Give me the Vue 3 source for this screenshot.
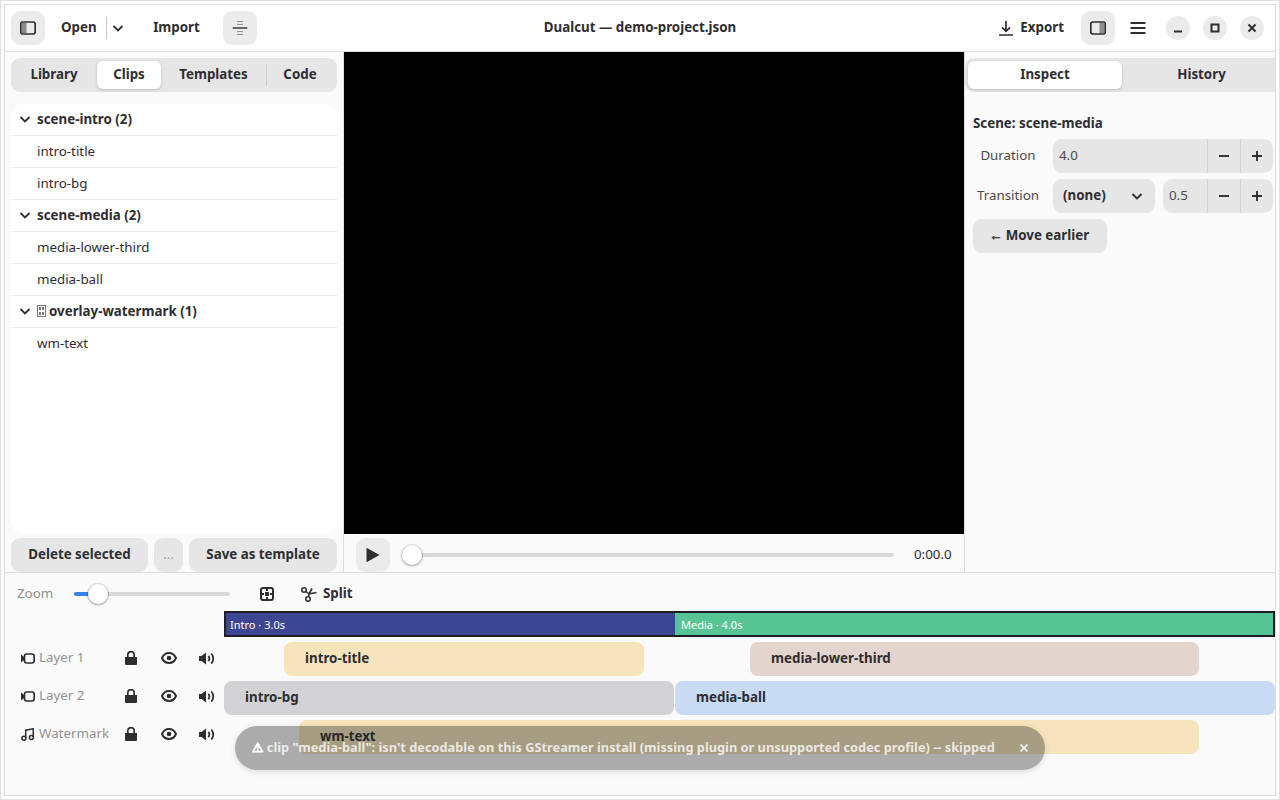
<template>
  <div class="screen">
    <div class="window">
      <header class="topbar">
        <div class="bar-side">
          <button class="icon-btn grey">
            <svg width="16" height="16" viewBox="0 0 16 16"><rect x=".8" y="2" width="14.400" height="12" rx="2" fill="none" stroke="#2e2e32" stroke-width="1.700"/><path d="M2 3h4.500v10H2z" fill="#2e2e32" opacity=".5"/></svg>
          </button>
          <div class="split-btn">
            <span class="open-label">Open</span>
            <span class="split-line"></span>
            <svg class="split-chev" width="12" height="12" viewBox="0 0 12 12"><path d="M1.500 4l4.500 4.500L10.500 4" fill="none" stroke="#2e2e32" stroke-width="1.800"/></svg>
          </div>
          <span class="import-label">Import</span>
          <button class="icon-btn grey snap">
            <svg width="16" height="16" viewBox="0 0 16 16"><path d="M5 1.500h6M5 4.500h6M5 11.500h6M5 14.500h6" stroke="#2e2e32" stroke-width="1.200" fill="none" opacity=".45"/><path d="M.7 8h14.600" stroke="#2e2e32" stroke-width="1.400"/></svg>
          </button>
        </div>
        <div class="title">Dualcut — demo-project.json</div>
        <div class="bar-side right">
          <div class="export">
            <svg width="14" height="16" viewBox="0 0 14 16"><path d="M7 1v10M3 7.400L7 11.400l4-4M0 15h14" fill="none" stroke="#2e2e32" stroke-width="1.700"/></svg>
            <span>Export</span>
          </div>
          <button class="icon-btn grey">
            <svg width="16" height="16" viewBox="0 0 16 16"><rect x=".8" y="2" width="14.400" height="12" rx="2" fill="none" stroke="#2e2e32" stroke-width="1.700"/><path d="M9.500 3H14v10H9.500z" fill="#2e2e32" opacity=".5"/></svg>
          </button>
          <button class="icon-btn">
            <svg width="16" height="16" viewBox="0 0 16 16"><path d="M.5 3h15M.5 8h15M.5 13h15" stroke="#2e2e32" stroke-width="2"/></svg>
          </button>
          <div class="win-btns">
            <span class="win-btn"><svg width="10" height="10" viewBox="0 0 10 10"><path d="M1 8.500h8" stroke="#2e2e32" stroke-width="2"/></svg></span>
            <span class="win-btn"><svg width="10" height="10" viewBox="0 0 10 10"><rect x="1.500" y="1.500" width="7" height="7" fill="none" stroke="#2e2e32" stroke-width="2"/></svg></span>
            <span class="win-btn"><svg width="10" height="10" viewBox="0 0 10 10"><path d="M1.500 1.500l7 7M8.500 1.500l-7 7" stroke="#2e2e32" stroke-width="2"/></svg></span>
          </div>
        </div>
      </header>

      <div class="main">
        <aside class="left">
          <div class="tabs">
            <span v-for="t in leftTabs" :key="t.name" class="tab" :class="[t.cls, { active: t.name === 'Clips' }]">{{ t.name }}</span>
            <span class="tab-sep"></span>
          </div>
          <div class="clip-list">
            <div v-for="row in clipRows" :key="row.name" class="clip-row" :class="{ head: row.head }">
              <svg v-if="row.head" class="row-chev" width="12" height="12" viewBox="0 0 12 12"><path d="M1.500 4l4.500 4.500L10.500 4" fill="none" stroke="#2e2e32" stroke-width="1.800"/></svg>
              <svg v-if="row.tofu" class="tofu" width="9" height="12" viewBox="0 0 9 12">
                <rect x=".5" y=".5" width="8" height="11" fill="none" stroke="#77777a"/>
                <path d="M2 2h2v3H2zM5 2h2v3H5zM2 7h2v3H2zM5 7h2v3H5z" fill="#77777a"/>
              </svg>
              <span>{{ row.name }}</span>
            </div>
          </div>
          <div class="left-actions">
            <button class="btn del">Delete selected</button>
            <button class="btn more">...</button>
            <button class="btn save">Save as template</button>
          </div>
        </aside>

        <section class="center">
          <div class="video"></div>
          <div class="transport">
            <button class="icon-btn grey">
              <svg width="16" height="16" viewBox="0 0 16 16"><path d="M1.500 .7L14.500 8 1.500 15.300z" fill="#2e2e32"/></svg>
            </button>
            <div class="seek">
              <span class="thumb seek-thumb"></span>
            </div>
            <span class="time">0:00.0</span>
          </div>
        </section>

        <aside class="inspector">
          <div class="tabs wide">
            <span class="tab active">Inspect</span>
            <span class="tab">History</span>
          </div>
          <div class="scene-title">Scene: scene-media</div>
          <div class="prop-row">
            <span class="prop-label">Duration</span>
            <div class="spin grow">
              <span class="spin-val">4.0</span>
              <span class="spin-btn"><svg width="12" height="12" viewBox="0 0 12 12"><path d="M1 6h10" stroke="#2e2e32" stroke-width="1.900"/></svg></span>
              <span class="spin-btn"><svg width="12" height="12" viewBox="0 0 12 12"><path d="M1 6h10M6 1v10" stroke="#2e2e32" stroke-width="1.900"/></svg></span>
            </div>
          </div>
          <div class="prop-row">
            <span class="prop-label">Transition</span>
            <div class="dropdown">
              <span>(none)</span>
              <svg width="12" height="12" viewBox="0 0 12 12"><path d="M1.500 4l4.500 4.500L10.500 4" fill="none" stroke="#2e2e32" stroke-width="1.800"/></svg>
            </div>
            <div class="spin small">
              <span class="spin-val">0.5</span>
              <span class="spin-btn"><svg width="12" height="12" viewBox="0 0 12 12"><path d="M1 6h10" stroke="#2e2e32" stroke-width="1.900"/></svg></span>
              <span class="spin-btn"><svg width="12" height="12" viewBox="0 0 12 12"><path d="M1 6h10M6 1v10" stroke="#2e2e32" stroke-width="1.900"/></svg></span>
            </div>
          </div>
          <button class="btn move"><span class="arrow">←</span> Move earlier</button>
        </aside>
      </div>

      <section class="timeline">
        <div class="tools">
          <span class="zoom-label">Zoom</span>
          <div class="zoom-slider">
            <span class="zoom-fill"></span>
            <span class="thumb zoom-thumb"></span>
          </div>
          <svg class="fit" width="16" height="16" viewBox="0 0 16 16">
            <rect x="2" y="2" width="12" height="12" rx="2" fill="none" stroke="#2e2e32" stroke-width="2"/>
            <path d="M6 6h4v4H6zM7 3h2v2H7zM7 11h2v2H7zM3 7h2v2H3zM11 7h2v2h-2z" fill="#2e2e32"/>
          </svg>
          <div class="split">
            <svg width="16" height="16" viewBox="0 0 16 16"><circle cx="3" cy="4" r="2.200" fill="none" stroke="#2e2e32" stroke-width="1.600"/><circle cx="7" cy="13" r="2.200" fill="none" stroke="#2e2e32" stroke-width="1.600"/><path d="M5 5.500L8 8l7.500-1.500M7.500 10.800L8 8l3-5.500" fill="none" stroke="#2e2e32" stroke-width="1.600"/></svg>
            <span>Split</span>
          </div>
        </div>

        <div class="ruler-row">
          <div class="ruler">
            <span class="scene intro">Intro · 3.0s</span>
            <span class="scene media">Media · 4.0s</span>
          </div>
        </div>

        <div class="layers">
          <div class="layer-heads">
            <div v-for="layer in layers" :key="layer.name" class="layer-head">
              <svg v-if="layer.kind === 'video'" class="kind" width="14" height="11" viewBox="0 0 14 11"><path d="M0 1.500L3 4V7L0 9.500z" fill="#2e2e32"/><rect x="3.500" y="1" width="9.700" height="9" rx="2.200" fill="none" stroke="#2e2e32" stroke-width="1.700"/></svg>
              <svg v-else class="kind" width="14" height="13" viewBox="0 0 14 13"><path d="M4.700 10V2.200l7.500-1.400V9" fill="none" stroke="#2e2e32" stroke-width="1.500"/><circle cx="2.900" cy="10.200" r="2" fill="none" stroke="#2e2e32" stroke-width="1.500"/><circle cx="10.400" cy="9.400" r="2" fill="none" stroke="#2e2e32" stroke-width="1.500"/></svg>
              <span class="layer-name">{{ layer.name }}</span>
              <svg class="l-lock" width="12" height="14" viewBox="0 0 12 14"><path d="M0 6h12v7a1 1 0 0 1-1 1H1a1 1 0 0 1-1-1z" fill="#2e2e32"/><path d="M2.800 6.500V3.800a3.200 3.200 0 0 1 6.400 0v2.700" fill="none" stroke="#2e2e32" stroke-width="1.700"/></svg>
              <svg class="l-eye" width="16" height="12" viewBox="0 0 16 12"><path d="M1 6C2.500 2.500 5 1 8 1s5.500 1.500 7 5c-1.500 3.500-4 5-7 5S2.500 9.500 1 6z" fill="none" stroke="#2e2e32" stroke-width="2"/><circle cx="8" cy="6" r="2.300" fill="#2e2e32"/></svg>
              <svg class="l-vol" width="16" height="13" viewBox="0 0 16 13"><path d="M0 4h2.500L7 .5v12L2.500 9H0z" fill="#2e2e32"/><path d="M9.300 3.800a3.800 3.800 0 0 1 0 5.400M12.300 1.500a7.500 7.500 0 0 1 0 10" fill="none" stroke="#2e2e32" stroke-width="1.800"/></svg>
            </div>
          </div>
          <div class="tracks">
            <div v-for="layer in layers" :key="layer.name" class="track">
              <div
                v-for="c in layer.clips"
                :key="c.name"
                class="clip"
                :style="{ left: c.start * pxPerSec + c.nudge + 'px', width: c.dur * pxPerSec + 'px', background: c.color }"
              >{{ c.name }}</div>
            </div>
          </div>
        </div>

        <div class="toast">
          <span class="toast-text"><span class="warn">⚠</span> clip "media-ball": isn't decodable on this GStreamer install (missing plugin or unsupported codec profile) -- skipped</span>
          <svg class="toast-x" width="10" height="10" viewBox="0 0 10 10"><path d="M1.500 1.500l7 7M8.500 1.500l-7 7" stroke="#fff" stroke-width="1.900"/></svg>
        </div>
      </section>
    </div>
  </div>
</template>

<script setup>
const pxPerSec = 150

const leftTabs = [
  { name: 'Library', cls: 't-lib' },
  { name: 'Clips', cls: 't-clips' },
  { name: 'Templates', cls: 't-tpl' },
  { name: 'Code', cls: 't-code' }
]

const clipRows = [
  { name: 'scene-intro (2)', head: true },
  { name: 'intro-title' },
  { name: 'intro-bg' },
  { name: 'scene-media (2)', head: true },
  { name: 'media-lower-third' },
  { name: 'media-ball' },
  { name: 'overlay-watermark (1)', head: true, tofu: true },
  { name: 'wm-text' }
]

const layers = [
  {
    name: 'Layer 1',
    kind: 'video',
    clips: [
      { name: 'intro-title', start: 0.4, dur: 2.4, nudge: 0, color: '#f5e4bc' },
      { name: 'media-lower-third', start: 3.5, dur: 2.994, nudge: 1, color: '#e3d5cd' }
    ]
  },
  {
    name: 'Layer 2',
    kind: 'video',
    clips: [
      { name: 'intro-bg', start: 0, dur: 3, nudge: 0, color: '#d2d2d5' },
      { name: 'media-ball', start: 3, dur: 4, nudge: 1, color: '#c8daf4' }
    ]
  },
  {
    name: 'Watermark',
    kind: 'audio',
    clips: [{ name: 'wm-text', start: 0.5, dur: 6, nudge: 0, color: '#f5e4bc' }]
  }
]
</script>

<style>
html, body { margin: 0; background: #fff; }
</style>

<style scoped>
* { box-sizing: border-box; }

.screen {
  width: 1280px;
  height: 800px;
  padding: 3px;
  border: 1px solid #e0e0e0;
  background: #fff;
  font-family: "Noto Sans", sans-serif;
  font-size: 13.33px;
  color: #2e2e32;
}
.window {
  position: relative;
  height: 100%;
  border: 1px solid #dcdcdc;
  background: #fafafa;
  display: flex;
  flex-direction: column;
  overflow: hidden;
}

.topbar {
  height: 47px;
  flex: none;
  background: #fff;
  border-bottom: 1px solid #dedede;
  padding: 6px 11px 6px 6px;
  display: flex;
  align-items: center;
  justify-content: space-between;
  position: relative;
}
.bar-side { display: flex; align-items: center; }
.icon-btn {
  width: 34px;
  height: 34px;
  border: none;
  border-radius: 9px;
  background: transparent;
  padding: 0;
  display: flex;
  align-items: center;
  justify-content: center;
  flex: none;
}
.icon-btn.grey { background: #ebebeb; }
.split-btn { display: flex; align-items: center; margin-left: 16px; font-weight: 700; }
.open-label { margin-top: -3px; width: 36px; }
.split-line { width: 1px; height: 22px; background: #c6c6c6; margin-left: 9px; }
.split-chev { margin-left: 5px; }
.import-label { font-weight: 700; margin: -3px 0 0 29px; width: 47px; text-align: center; white-space: nowrap; }
.snap { margin-left: 23px; }
.title {
  position: absolute;
  left: 0;
  right: 0;
  top: 13px;
  text-align: center;
  font-weight: 700;
  pointer-events: none;
}
.export { display: flex; align-items: center; gap: 7px; font-weight: 700; margin-right: 17px; }
.export span { margin-top: -3px; }
.bar-side.right .icon-btn + .icon-btn { margin-left: 6px; }
.win-btns { display: flex; gap: 13px; margin-left: 11px; }
.win-btn {
  width: 24px;
  height: 24px;
  border-radius: 50%;
  background: #ebebeb;
  display: flex;
  align-items: center;
  justify-content: center;
}

.main { height: 521px; flex: none; display: flex; border-bottom: 1px solid #dedede; }

.left {
  width: 339px;
  flex: none;
  border-right: 1px solid #dedede;
  padding: 6px 6px 0;
  display: flex;
  flex-direction: column;
}
.tabs {
  position: relative;
  height: 34px;
  flex: none;
  background: #e6e6e6;
  border-radius: 9px;
  padding: 3px;
  display: flex;
  font-weight: 700;
}
.tab {
  height: 28px;
  padding-bottom: 3px;
  display: flex;
  align-items: center;
  justify-content: center;
  border-radius: 6px;
}
.tab.active { background: #fff; box-shadow: 0 1px 3px rgba(0, 0, 0, 0.18); }
.t-lib { width: 83px; padding-right: 3px; }
.t-clips { width: 64px; }
.t-tpl { width: 105px; }
.t-code { width: 68px; }
.tab-sep {
  position: absolute;
  left: 255px;
  top: 6px;
  width: 1px;
  height: 22px;
  background: #cfcfcf;
}
.clip-list {
  margin-top: 12px;
  height: 429px;
  flex: none;
  background: #fff;
  border-radius: 12px;
}
.clip-row {
  height: 32px;
  padding: 0 0 2px 26px;
  display: flex;
  align-items: center;
  border-bottom: 1px solid #ededed;
}
.clip-row:last-child { border-bottom: none; }
.clip-row.head { padding-left: 8px; font-weight: 700; }
.row-chev { margin-right: 6px; }
.tofu { margin-right: 3px; }
.left-actions { display: flex; gap: 6px; margin-top: 5px; }
.btn {
  height: 34px;
  border: none;
  border-radius: 9px;
  background: #e6e6e6;
  font: 700 13.33px "Noto Sans", sans-serif;
  color: #2e2e32;
  padding: 0 0 3px;
}
.del { width: 137px; }
.more { width: 29px; font-weight: 400; color: #9a9a9a; font-size: 13px; }
.save { width: 148px; }

.center { width: 620px; flex: none; display: flex; flex-direction: column; }
.video { height: 482px; background: #000; }
.transport {
  height: 38px;
  display: flex;
  align-items: flex-start;
  padding: 4px 12px 0;
}
.seek {
  position: relative;
  width: 492px;
  height: 4px;
  background: #dadada;
  border-radius: 2px;
  margin: 15px 0 0 12px;
}
.thumb {
  position: absolute;
  width: 20px;
  height: 20px;
  border-radius: 50%;
  background: #fff;
  box-shadow: 0 0 0 1px rgba(0, 0, 0, 0.1), 0 1px 3px rgba(0, 0, 0, 0.3);
}
.seek-thumb { left: 0; top: -8px; }
.time { margin-left: 20px; margin-top: 7px; }

.inspector {
  flex: 1;
  border-left: 1px solid #dedede;
  padding-top: 6px;
  min-width: 0;
}
.tabs.wide { border-radius: 9px 0 0 9px; padding-right: 0; }
.tabs.wide .tab { width: 154px; }
.tabs.wide .tab + .tab { flex: 1; padding-left: 6px; }
.scene-title { font-weight: 700; margin: 21px 0 0 8px; height: 20px; line-height: 20px; }
.prop-row { display: flex; align-items: center; margin: 6px 2px 0 8px; gap: 8px; }
.prop-label { width: 72px; flex: none; text-align: center; color: #4a4a4e; padding: 0 2px 2px 0; }
.spin {
  height: 34px;
  background: #e6e6e6;
  border-radius: 9px;
  display: flex;
  align-items: center;
}
.spin.grow { flex: 1; }
.spin.small { width: 110px; }
.spin-val { flex: 1; padding: 0 0 2px 6px; color: #4a4a4e; }
.spin-btn {
  width: 33px;
  height: 34px;
  border-left: 1px solid #d2d2d2;
  display: flex;
  align-items: center;
  justify-content: center;
}
.dropdown {
  width: 102px;
  height: 34px;
  flex: none;
  background: #e6e6e6;
  border-radius: 9px;
  padding: 0 12px 0 10px;
  display: flex;
  align-items: center;
  justify-content: space-between;
  font-weight: 700;
}
.dropdown span { margin-top: -3px; }
.move { width: 134px; margin: 6px 0 0 8px; display: block; padding-right: 2px; }
.arrow { -webkit-text-stroke: 0.4px #2e2e32; }

.timeline { flex: 1; position: relative; min-height: 0; }
.tools { height: 38px; display: flex; align-items: center; padding-left: 12px; margin-top: 2px; }
.zoom-label { color: #8f8f8f; width: 57px; flex: none; padding-bottom: 2px; }
.zoom-slider {
  position: relative;
  width: 156px;
  height: 4px;
  background: #dadada;
  border-radius: 2px;
}
.zoom-fill {
  position: absolute;
  left: 0;
  top: 0;
  width: 20px;
  height: 4px;
  border-radius: 2px;
  background: #3584e4;
}
.zoom-thumb { left: 14px; top: -8px; }
.fit { margin-left: 29px; }
.split { display: flex; align-items: center; gap: 6px; margin-left: 26px; font-weight: 700; }
.split span { margin-top: -3px; }
.ruler-row { padding-left: 219px; margin-top: -2px; }
.ruler {
  height: 26px;
  border: 2px solid #1e1e22;
  display: flex;
  font-size: 11px;
  color: #fff;
}
.scene { display: flex; align-items: center; padding-left: 4px; }
.scene.intro { width: 449px; background: #3d4692; }
.scene.media { flex: 1; background: #57c493; padding-left: 6px; }

.layers { display: flex; }
.layer-heads { width: 219px; flex: none; padding-top: 2px; }
.layer-head {
  height: 38px;
  display: flex;
  align-items: center;
  padding-left: 16px;
  position: relative;
}
.kind { margin-right: 4px; flex: none; }
.layer-name { color: #929292; width: 85px; padding-bottom: 2px; }
.l-lock { position: absolute; left: 120px; top: 12px; }
.l-eye { position: absolute; left: 156px; top: 13px; }
.l-vol { position: absolute; left: 194px; top: 13px; }
.tracks { flex: 1; padding-top: 5px; }
.track { position: relative; height: 39px; }
.clip {
  position: absolute;
  top: 0;
  height: 34px;
  border-radius: 8px;
  padding: 0 0 3px 21px;
  display: flex;
  align-items: center;
  font-weight: 700;
  white-space: nowrap;
}

.toast {
  position: absolute;
  left: 230px;
  top: 153px;
  width: 810px;
  height: 44px;
  border-radius: 22px;
  background: rgba(30, 30, 30, 0.36);
  box-shadow: 0 2px 6px rgba(0, 0, 0, 0.12);
  display: flex;
  align-items: center;
  padding: 0 0 3px 17px;
}
.toast-text {
  font-family: "Noto Sans", "DejaVu Sans", sans-serif;
  font-size: 12.800px;
  font-weight: 700;
  color: rgba(255, 255, 255, 0.78);
  white-space: nowrap;
}
.warn { color: #fff; -webkit-text-stroke: 1px #fff; }
.toast-x { position: absolute; left: 784px; top: 17px; opacity: 0.8; }
</style>
